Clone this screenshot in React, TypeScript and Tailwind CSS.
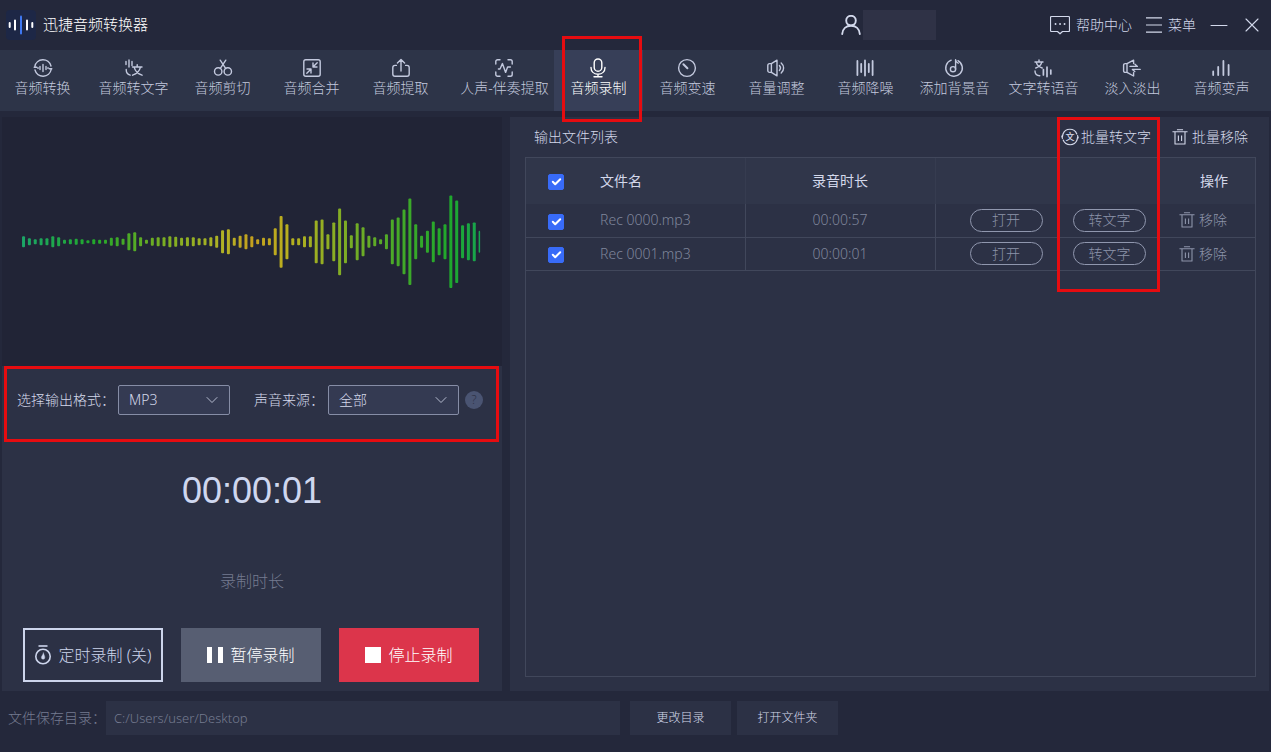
import React, { useState } from "react";

type IconProps = { className?: string };

const stroke = {
  fill: "none",
  stroke: "currentColor",
  strokeWidth: 1.4,
  strokeLinecap: "round" as const,
  strokeLinejoin: "round" as const,
  "aria-hidden": true,
};

function ToolIcon({ children }: { children: React.ReactNode }) {
  return (
    <svg viewBox="0 0 20 20" className="size-5 shrink-0" {...stroke}>
      {children}
    </svg>
  );
}

function Glyph({ x, y, size }: { x: number; y: number; size: number }) {
  return (
    <text x={x} y={y} fontSize={size} textAnchor="middle" fill="currentColor" stroke="none" fontWeight="500">
      文
    </text>
  );
}

const tools: { label: string; wide?: boolean; icon: React.ReactNode }[] = [
  {
    label: "音频转换",
    icon: (
      <>
        <path d="M1.8 8.6A8.3 8.3 0 0 1 18 8M18.2 11.4A8.3 8.3 0 0 1 2 12M1.2 9.2h2.6M16.2 10.8h2.6" />
        <path d="M7 8.4v3.2M10 6.4v7.2M13 8.4v3.2M5 9.6v.8M15 9.6v.8" />
      </>
    ),
  },
  {
    label: "音频转文字",
    icon: (
      <>
        <path d="M2 3.5v3M5 2v7M8 3.5v4M2.2 11.5c0 3.2 1 5 4 5.6" />
        <path d="M8.5 9H18M13.2 6.8V9M10.2 9.4c1 3.8 3.6 6.4 7.8 7.8M16.4 9.4c-1 3.8-3.6 6.4-7.8 7.8" />
      </>
    ),
  },
  {
    label: "音频剪切",
    icon: (
      <>
        <circle cx="5.2" cy="13.4" r="3.7" />
        <circle cx="14.8" cy="13.4" r="3.7" />
        <path d="M7.2 2.2l5.6 8.4M12.8 2.2l-5.6 8.4" />
      </>
    ),
  },
  {
    label: "音频合并",
    icon: (
      <>
        <rect x="1.8" y="1.8" width="16.4" height="16.4" rx="2" />
        <path d="M15.2 4.8l-4 4M11 5v4h4M4.8 15.2l4-4M9 15v-4H5" />
      </>
    ),
  },
  {
    label: "音频提取",
    icon: <path d="M10 13V2M6.4 5L10 1.6 13.6 5M5.4 7.4H4a2.2 2.2 0 0 0-2.2 2.2V16A2.2 2.2 0 0 0 4 18.2h12a2.2 2.2 0 0 0 2.2-2.2V9.6A2.2 2.2 0 0 0 16 7.4h-1.4" />,
  },
  {
    label: "人声-伴奏提取",
    wide: true,
    icon: (
      <path d="M1.8 6V3.6a1.8 1.8 0 0 1 1.8-1.8H6M14 1.8h2.4a1.8 1.8 0 0 1 1.8 1.8V6M18.2 14v2.4a1.8 1.8 0 0 1-1.8 1.8H14M6 18.2H3.6a1.8 1.8 0 0 1-1.8-1.8V14M4.4 11H6l2.4-5.4 3.2 8.8L13.6 9h2.8" />
    ),
  },
  {
    label: "音频录制",
    icon: (
      <>
        <rect x="6.2" y="1" width="7.6" height="12.2" rx="3.8" />
        <path d="M3 9.4c0 4 2.8 6.8 7 6.8s7-2.8 7-6.8M10 16.2v2.6M6 18.8h8" />
      </>
    ),
  },
  {
    label: "音频变速",
    icon: (
      <>
        <circle cx="10" cy="10" r="8.4" />
        <path d="M6.4 6.2l4 4" strokeWidth="2" />
      </>
    ),
  },
  {
    label: "音量调整",
    icon: (
      <path d="M5.4 5.6v8.8M5.4 5.6H3.6A1.8 1.8 0 0 0 1.8 7.400v5.200a1.8 1.8 0 0 0 1.8 1.8h1.800l5.600 3.400V2.200zM13.400 7.600c1.300 1.400 1.300 3.400 0 4.800M15.200 5c3.200 2.800 3.200 7.200 0 10" />
    ),
  },
  {
    label: "音频降噪",
    icon: <path d="M2.4 3v14M6.200 6v8M10 2.400v15.200M13.800 6v8M17.600 3v14" strokeWidth="1.8" />,
  },
  {
    label: "添加背景音",
    icon: (
      <>
        <path d="M7.200 2.200A8.300 8.300 0 1 0 14 2.700" />
        <circle cx="9" cy="11.200" r="2.600" />
        <path d="M11.600 11.200V1.800c.2 1.800 1 2.800 2.600 3.400" />
      </>
    ),
  },
  {
    label: "文字转语音",
    icon: (
      <>
        <path d="M2 4h8M6 2v2M3.300 4.400c.7 2.600 2.700 4.600 5.900 5.600M8.700 4.400C8 7 6 9 2.800 10M2 13c0 3 1.600 4.600 4.800 4.800" />
        <path d="M10.400 11.500v5.500M14 9.200v9.400M17.800 12v4" strokeWidth="1.7" />
      </>
    ),
  },
  {
    label: "淡入淡出",
    icon: (
      <path d="M5 5.600v8.800M11.600 5.600V2.200L5 5.600H3.200A1.600 1.600 0 0 0 1.600 7.200v5.600a1.600 1.600 0 0 0 1.600 1.600H5l6.600 3.600v-3.400M8 8.400h7.400L13 6.200M18.200 11.400H10.400l2.400 2.200" />
    ),
  },
  {
    label: "音频变声",
    icon: <path d="M2.200 13.500v3.500M7.200 9v8M12.400 3v14M17.600 7v10" strokeWidth="1.8" />,
  },
];

const bars = [
  11, 7, 5, 7, 7, 11, 9, 4, 5, 6, 5, 3, 5, 4, 4, 8, 9, 6, 17, 19, 9, 4, 8, 9, 9, 11, 10, 8, 9, 9, 7, 7, 9, 12, 23, 25, 8,
  12, 15, 11, 5, 8, 7, 27, 52, 35, 7, 7, 11, 11, 43, 45, 15, 39, 67, 43, 13, 37, 29, 12, 9, 5, 15, 45, 49, 65, 87, 35, 12,
  22, 41, 27, 35, 93, 83, 33, 37, 39, 22,
];

function Waveform() {
  return (
    <svg viewBox="0 0 462 94" className="w-full" role="img" aria-label="waveform">
      <defs>
        <linearGradient id="wave" gradientUnits="userSpaceOnUse" x1="0" y1="0" x2="462" y2="0">
          <stop offset="0" stopColor="#1ba667" />
          <stop offset="0.16" stopColor="#22a82a" />
          <stop offset="0.32" stopColor="#80ae22" />
          <stop offset="0.44" stopColor="#b3b225" />
          <stop offset="0.5" stopColor="#c4a01e" />
          <stop offset="0.58" stopColor="#b9b01f" />
          <stop offset="0.7" stopColor="#7fad25" />
          <stop offset="0.84" stopColor="#3ca929" />
          <stop offset="0.93" stopColor="#1fa82c" />
          <stop offset="1" stopColor="#16a452" />
        </linearGradient>
      </defs>
      {bars.map((h, i) => (
        <rect key={i} x={i * 5.88} y={47 - h / 2} width={i === bars.length - 1 ? 1.5 : 3} height={h} rx="1" fill="url(#wave)" />
      ))}
    </svg>
  );
}

function TrashIcon({ className }: IconProps) {
  return (
    <svg viewBox="0 0 16 16" className={className} {...stroke} strokeWidth={1.1} strokeLinecap="square">
      <path d="M1 2.800h14M5.500.8h5M3 3v12h10V3M6.400 7v4.500M9.600 7v4.500" />
    </svg>
  );
}

function Check({ label, checked, onChange }: { label: string; checked: boolean; onChange: () => void }) {
  return (
    <label className="relative inline-block size-4 align-middle">
      <input
        type="checkbox"
        aria-label={label}
        checked={checked}
        onChange={onChange}
        className="block size-4 appearance-none rounded-xs border border-[#8087a0] checked:border-[#386bf8] checked:bg-[#386bf8]"
      />
      {checked && (
        <svg viewBox="0 0 16 16" className="pointer-events-none absolute inset-0 size-4 text-white" {...stroke} strokeWidth={2}>
          <path d="M4.800 7.800l2.400 2.400 5-5" />
        </svg>
      )}
    </label>
  );
}

function Dropdown({ id, className, options }: { id: string; className: string; options: string[] }) {
  return (
    <div className={`relative h-[30px] ${className}`}>
      <select
        id={id}
        className="size-full appearance-none rounded-xs border border-[#868da6] bg-[#343a52] pl-2.5 text-sm text-[#d3d8ea] outline-none"
      >
        {options.map((o) => (
          <option key={o}>{o}</option>
        ))}
      </select>
      <svg viewBox="0 0 12 8" className="pointer-events-none absolute top-[11px] right-3 h-2 w-3 text-[#b4bace]" {...stroke} strokeWidth={1}>
        <path d="M1 1.500l5 5 5-5" />
      </svg>
    </div>
  );
}

function TitleBar() {
  return (
    <header className="flex h-[50px] items-center pr-3 pl-1.5 text-sm text-[#d3d9ec]">
      <svg viewBox="0 0 30 30" className="size-[30px] shrink-0" aria-hidden="true">
        <rect width="30" height="30" rx="4" fill="#1d2746" />
        <g strokeWidth="2" strokeLinecap="round">
          <path d="M3.700 13v4M9 10.500v9M21 10.500v9M26.300 13v4" stroke="#fff" />
          <path d="M15 6.500v17" stroke="#3f78f2" />
        </g>
      </svg>
      <h1 className="ml-[7px] text-[15px] text-white">迅捷音频转换器</h1>
      <button aria-label="user" className="ml-auto flex items-center">
        <svg viewBox="0 0 20 20" className="size-5" {...stroke} strokeWidth={1.9}>
          <circle cx="10" cy="5.600" r="4.800" />
          <path d="M1.200 19c.4-5 4-8.200 8.800-8.200s8.400 3.200 8.800 8.200" />
        </svg>
        <span className="ml-0.5 h-[30px] w-[73px] bg-[#2f3246]" />
      </button>
      <button className="ml-[114px] flex items-center gap-1.5 whitespace-nowrap">
        <svg viewBox="0 0 20 20" className="size-5" {...stroke} strokeWidth={1.200}>
          <path d="M1.500 1.500h17a1 1 0 0 1 1 1v13a1 1 0 0 1-1 1H12.500L10 18.800 7.500 16.500H1.500a1 1 0 0 1-1-1v-13a1 1 0 0 1 1-1z" />
          <path d="M5.500 9h.1M10 9h.1M14.500 9h.1" strokeWidth="1.800" />
        </svg>
        帮助中心
      </button>
      <button className="ml-3.5 flex items-center gap-1.5 whitespace-nowrap">
        <svg viewBox="0 0 16 16" className="size-4" {...stroke} strokeWidth={1.200} strokeLinecap="butt">
          <path d="M0 .8h16M0 8h16M0 15.200h16" />
        </svg>
        菜单
      </button>
      <button aria-label="minimize" className="ml-3.5">
        <svg viewBox="0 0 18 14" className="h-3.5 w-[18px]" {...stroke} strokeWidth={1}>
          <path d="M1 7.500h16" />
        </svg>
      </button>
      <button aria-label="close" className="ml-[17px]">
        <svg viewBox="0 0 14 14" className="size-3.5" {...stroke} strokeWidth={1.100}>
          <path d="M1 1l12 12M13 1L1 13" />
        </svg>
      </button>
    </header>
  );
}

function Toolbar() {
  return (
    <nav className="flex h-[61px] bg-[#2d3448] pr-[5px]">
      {tools.map((t, i) => {
        const active = t.label === "音频录制";
        const size = t.wide ? "flex-[100] pl-2.5" : i === 0 ? "flex-[86] pr-1" : "flex-[90]";
        return (
          <button
            key={t.label}
            className={`relative flex basis-0 flex-col items-center pt-2 text-sm whitespace-nowrap ${size} ${
              active ? "bg-[#373f58] text-white" : "text-[#c3c9de]"
            }`}
          >
            <ToolIcon>{t.icon}</ToolIcon>
            <span>{t.label}</span>
            {active && (
              <span className="pointer-events-none absolute -top-3.5 right-px -bottom-[11px] left-2 z-10 border-3 border-[#e60c10]" />
            )}
          </button>
        );
      })}
    </nav>
  );
}

function Recorder() {
  return (
    <section className="flex flex-col bg-[#2c3145]">
      <div className="flex h-[249px] items-center bg-[#212436] px-5">
        <Waveform />
      </div>
      <div className="relative flex h-[76px] items-start pt-[19px] pl-[15px] text-sm text-[#d3d8ea]">
        <label htmlFor="format" className="w-[101px] leading-[30px] whitespace-nowrap">
          选择输出格式：
        </label>
        <Dropdown id="format" className="w-28" options={["MP3", "WAV", "FLAC"]} />
        <label htmlFor="source" className="ml-6 w-[74px] leading-[30px] whitespace-nowrap">
          声音来源：
        </label>
        <Dropdown id="source" className="w-[131px]" options={["全部", "麦克风", "系统声音"]} />
        <button className="mt-1.5 ml-1.5 size-[18px] rounded-full bg-[#4a5472] text-xs leading-[18px] text-[#2c3145]">?</button>
        <span className="pointer-events-none absolute inset-y-0 right-[3px] left-0.5 border-3 border-[#e60c10]" />
      </div>
      <div className="flex flex-1 flex-col items-center">
        <p className="mt-[29px] text-4xl font-normal text-[#cfd7ef] [font-family:'Liberation_Sans',sans-serif]">00:00:01</p>
        <p className="mt-[58px] text-base text-[#757b90]">录制时长</p>
      </div>
      <div className="mx-[21px] mb-[9px] grid grid-cols-3 gap-[18px] pr-0.5 text-base whitespace-nowrap text-white">
        <button className="flex h-[54px] items-center justify-center gap-1.5 border-2 border-[#cdd5ec] text-[#cdd5ec]">
          <svg viewBox="0 0 18 20" className="h-5 w-[18px]" {...stroke} strokeWidth={1.600}>
            <circle cx="9" cy="11.500" r="7.200" />
            <path d="M4.500 1h9" strokeLinecap="butt" />
            <path d="M9.400 8c-.4 2-2 3-2 4.600a1.700 1.700 0 0 0 3.400 0c0-1.600-.8-2.600-1.400-4.600z" fill="currentColor" strokeWidth=".4" />
          </svg>
          定时录制 (关)
        </button>
        <button className="flex h-[54px] items-center justify-center gap-[7px] bg-[#575e72]">
          <svg viewBox="0 0 16 16" className="size-4" fill="currentColor" aria-hidden="true">
            <path d="M0 0h5v16H0zM11 0h5v16h-5z" />
          </svg>
          暂停录制
        </button>
        <button className="flex h-[54px] items-center justify-center gap-[7px] bg-[#dc354b]">
          <span className="size-4 bg-white" />
          停止录制
        </button>
      </div>
    </section>
  );
}

const files = [
  { name: "Rec 0000.mp3", time: "00:00:57" },
  { name: "Rec 0001.mp3", time: "00:00:01" },
];

function FileList() {
  const [picked, setPicked] = useState([true, true]);
  const all = picked.every(Boolean);
  const pill = "block h-[23px] w-[73px] rounded-full border border-[#9097ae] text-sm leading-5";

  return (
    <section className="relative flex flex-col bg-[#2c3145] pr-[13px] pb-3.5 pl-[15px]">
      <div className="flex h-10 items-center pr-2 pl-[9px] text-sm whitespace-nowrap text-[#d3d8ea]">
        <h2>输出文件列表</h2>
        <button className="ml-auto flex items-center gap-0.5">
          <svg viewBox="0 0 18 18" className="size-[18px]" {...stroke} strokeWidth={1.200}>
            <path d="M2 6a7.400 7.400 0 0 1 13.800 0M16 12A7.400 7.400 0 0 1 2.200 12M1.200 9.500L2 6M16.800 8.500L16 12M.8 8l.6 2.400M17.200 10L16.600 7.600" />
            <Glyph x={9} y={12} size={9} />
          </svg>
          批量转文字
        </button>
        <button className="ml-[21px] flex items-center gap-1">
          <TrashIcon className="size-4" />
          批量移除
        </button>
      </div>
      <div className="flex-1 border border-[#41475b]">
        <table className="w-full table-fixed border-collapse text-sm">
          <colgroup>
            <col className="w-[60px]" />
            <col className="w-[159px]" />
            <col className="w-[190px]" />
            <col className="w-[123px]" />
            <col className="w-[103px]" />
            <col className="w-[94px]" />
          </colgroup>
          <thead className="bg-[#30364a] text-[#d3d8ea]">
            <tr className="h-[46px]">
              <th className="font-normal">
                <Check label="全选" checked={all} onChange={() => setPicked(picked.map(() => !all))} />
              </th>
              <th className="border-r border-[#363c50] pl-3.5 text-left font-normal">文件名</th>
              <th className="border-r border-[#363c50] font-normal">录音时长</th>
              <th />
              <th />
              <th className="pl-[39px] text-left font-normal">操作</th>
            </tr>
          </thead>
          <tbody className="text-[#8d94aa]">
            {files.map((f, i) => (
              <tr key={f.name} className="h-[33px] border-b border-[#41475b]">
                <td className="text-center">
                  <Check label={f.name} checked={picked[i]} onChange={() => setPicked(picked.map((p, j) => (j === i ? !p : p)))} />
                </td>
                <td className="border-r border-[#41475b] pl-3.5 text-[#7f869b]">{f.name}</td>
                <td className="border-r border-[#41475b] text-center text-[#7f869b]">{f.time}</td>
                <td className="pl-[34px]">
                  <button className={pill}>打开</button>
                </td>
                <td className="pl-[15px]">
                  <button className={pill}>转文字</button>
                </td>
                <td className="pl-[18px]">
                  <button className="flex items-center gap-1 whitespace-nowrap">
                    <TrashIcon className="size-4" />
                    移除
                  </button>
                </td>
              </tr>
            ))}
          </tbody>
        </table>
      </div>
      <span className="pointer-events-none absolute top-0 right-[109px] h-[175px] w-[103px] border-3 border-[#e60c10]" />
    </section>
  );
}

function SaveBar() {
  return (
    <footer className="flex h-[61px] items-center pt-1 pb-3 pl-2 text-[#d3d8ea]">
      <label htmlFor="path" className="w-[98px] text-sm whitespace-nowrap text-[#757b90]">
        文件保存目录：
      </label>
      <input
        id="path"
        readOnly
        value="C:/Users/user/Desktop"
        className="h-[34px] w-[514px] bg-[#2c3145] px-2 text-[13px] text-[#757b90] outline-none"
      />
      <button className="ml-2.5 h-[34px] w-[101px] bg-[#2c3145] text-xs">更改目录</button>
      <button className="ml-1.5 h-[34px] w-[101px] bg-[#2c3145] text-xs">打开文件夹</button>
    </footer>
  );
}

export default function App() {
  return (
    <div className="flex min-h-screen flex-col bg-[#24283b] font-light [font-family:'Noto_Sans','Noto_Sans_CJK_SC',sans-serif]">
      <TitleBar />
      <Toolbar />
      <main className="mt-1.5 grid flex-1 grid-cols-[500fr_759fr] gap-2 px-0.5">
        <Recorder />
        <FileList />
      </main>
      <SaveBar />
    </div>
  );
}
